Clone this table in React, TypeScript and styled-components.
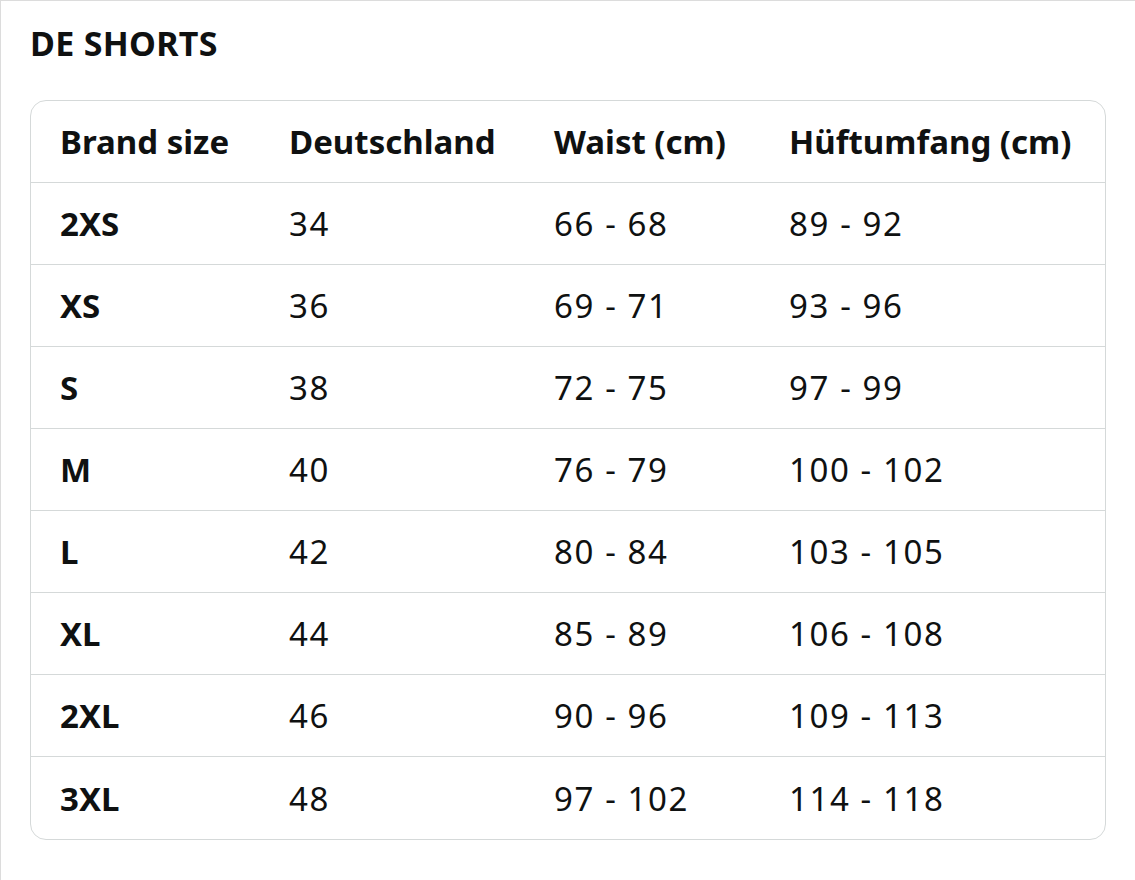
import React from 'react';
import styled, { createGlobalStyle } from 'styled-components';

interface row {
  size: string,
  de: string,
  waist: string,
  hip: string,
}

const rows: row[] = [
  { size: '2XS', de: '34', waist: '66 - 68', hip: '89 - 92' },
  { size: 'XS', de: '36', waist: '69 - 71', hip: '93 - 96' },
  { size: 'S', de: '38', waist: '72 - 75', hip: '97 - 99' },
  { size: 'M', de: '40', waist: '76 - 79', hip: '100 - 102' },
  { size: 'L', de: '42', waist: '80 - 84', hip: '103 - 105' },
  { size: 'XL', de: '44', waist: '85 - 89', hip: '106 - 108' },
  { size: '2XL', de: '46', waist: '90 - 96', hip: '109 - 113' },
  { size: '3XL', de: '48', waist: '97 - 102', hip: '114 - 118' },
];

const GlobalStyle = createGlobalStyle`
  html, body {
    margin: 0;
    padding: 0;
    background: #ffffff;
  }
  body {
    font-family: "Noto Sans", "Open Sans", sans-serif;
    color: #0f1111;
  }
`

const Page = styled.div`
  width: 1135px;
  height: 880px;
  box-sizing: border-box;
  border-left: 1px solid #dcdcdc;
  border-top: 1px solid #dcdcdc;
  padding: 22px 29px 0 29px;
`

const Title = styled.h2`
  margin: 0 0 37px 0;
  font-size: 34px;
  line-height: 40px;
  font-weight: 700;
  letter-spacing: 0.3px;
`

const Table = styled.div`
  border: 1.5px solid #d5d9d9;
  border-radius: 16px;
  overflow: hidden;
`

const Row = styled.div<{ $last?: boolean }>`
  display: grid;
  grid-template-columns: 229px 265px 235px 1fr;
  height: 82px;
  align-items: center;
  border-bottom: ${p => (p.$last ? 'none' : '1.5px solid #d5d9d9')};
  box-sizing: border-box;
`

const Cell = styled.div<{ $bold?: boolean }>`
  padding-left: 29px;
  font-size: 33px;
  font-weight: ${p => (p.$bold ? 700 : 400)};
  letter-spacing: ${p => (p.$bold ? '0' : '1.6px')};
  white-space: nowrap;
`

export default function App() {
  return (
    <Page>
      <GlobalStyle />
      <Title>DE SHORTS</Title>
      <Table>
        <Row>
          <Cell $bold>Brand size</Cell>
          <Cell $bold>Deutschland</Cell>
          <Cell $bold>Waist (cm)</Cell>
          <Cell $bold>Hüftumfang (cm)</Cell>
        </Row>
        {rows.map((r, i) => (
          <Row key={r.size} $last={i === rows.length - 1}>
            <Cell $bold>{r.size}</Cell>
            <Cell>{r.de}</Cell>
            <Cell>{r.waist}</Cell>
            <Cell>{r.hip}</Cell>
          </Row>
        ))}
      </Table>
    </Page>
  )
}
